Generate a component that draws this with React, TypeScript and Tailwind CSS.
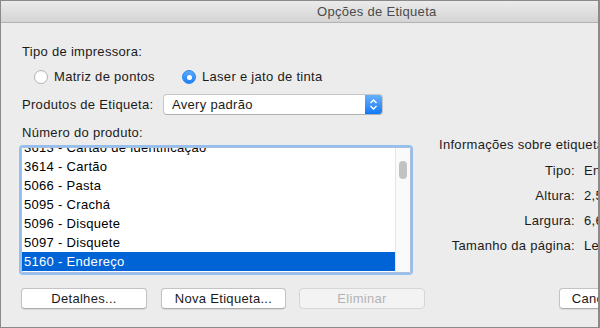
import React from 'react';

const products = [
  '3613 - Cartão de identificação',
  '3614 - Cartão',
  '5066 - Pasta',
  '5095 - Crachá',
  '5096 - Disquete',
  '5097 - Disquete',
  '5160 - Endereço',
];

const info = [
  ['Tipo:', 'Endereço'],
  ['Altura:', '2,54 cm'],
  ['Largura:', '6,67 cm'],
  ['Tamanho da página:', 'Letter'],
];

const Radio: React.FC<{ checked?: boolean; label: string; className?: string }> = ({ checked, label, className }) => (
  <div className={`flex items-center gap-[6px] ${className ?? ''}`}>
    {checked ? (
      <span className="w-[14px] h-[14px] rounded-full bg-gradient-to-b from-[#5aaaff] to-[#1a7ff5] border border-[#2b84ea] flex items-center justify-center">
        <span className="w-[5px] h-[5px] rounded-full bg-white" />
      </span>
    ) : (
      <span className="w-[14px] h-[14px] rounded-full bg-white border border-[#b4b4b4] shadow-[inset_0_1px_1px_rgba(0,0,0,0.04)]" />
    )}
    <span>{label}</span>
  </div>
);

const Button: React.FC<{ label: string; disabled?: boolean; className?: string }> = ({ label, disabled, className }) => (
  <button
    className={`h-[21px] rounded-[4px] border text-[13px] leading-none tracking-[0.3px] ${
      disabled
        ? 'bg-[#f3f3f3] border-[#d6d6d6] text-[#b3b3b3]'
        : 'bg-white border-[#c3c3c3] border-b-[#adadad] text-[#1a1a1a] shadow-[0_0.5px_1px_rgba(0,0,0,0.08)]'
    } ${className ?? ''}`}
  >
    {label}
  </button>
);

export default function App() {
  return (
    <div
      className="w-[600px] h-[328px] overflow-hidden bg-[#ececec] border border-r-2 border-[#8a8a8a] flex flex-col text-[13px] tracking-[0.3px] text-[#1b1b1b]"
      style={{ fontFamily: '"Liberation Sans", Arial, sans-serif' }}
    >
      <div className="h-[22px] shrink-0 flex items-center pl-[316px] bg-gradient-to-b from-[#ebebeb] to-[#d4d4d4] border-b border-[#b2b2b2] text-[#4b4b4b]">
        Opções de Etiqueta
      </div>

      <div className="flex flex-col pl-[21px]">
        <div className="mt-[21px] h-[16px] leading-[16px]">Tipo de impressora:</div>

        <div className="mt-[9px] h-[16px] leading-[16px] flex pl-[12px]">
          <Radio label="Matriz de pontos" className="w-[148px]" />
          <Radio checked label="Laser e jato de tinta" />
        </div>

        <div className="mt-[9px] h-[21px] flex items-center">
          <span className="w-[141px]">Produtos de Etiqueta:</span>
          <div className="w-[220px] h-[21px] flex bg-white border border-[#c6c6c6] border-b-[#b0b0b0] rounded-[4px] overflow-hidden">
            <span className="flex-1 flex items-center pl-[8px]">Avery padrão</span>
            <span className="w-[17px] flex items-center justify-center bg-gradient-to-b from-[#64b0fb] to-[#0b79f6]">
              <svg width="9" height="13" viewBox="0 0 9 13" fill="none" stroke="white" strokeWidth="1.4">
                <path d="M1.5 5 L4.5 2 L7.5 5" />
                <path d="M1.5 8 L4.5 11 L7.5 8" />
              </svg>
            </span>
          </div>
        </div>

        <div className="mt-[10px] flex">
          <div className="w-[391px] shrink-0 flex flex-col">
            <div className="h-[16px] leading-[16px]">Número do produto:</div>
            <div className="mt-[4px] -ml-[3px] w-[394px] h-[130px] rounded-[4px] border-2 border-[#95bff1]">
              <div className="h-full border border-[#a9bedb] rounded-[2px] bg-white flex overflow-hidden">
                <div className="flex-1 overflow-hidden">
                  <div className="-mt-[10px]">
                    {products.map((p, i) => (
                      <div
                        key={p}
                        className={`h-[19px] leading-[19px] pl-[2px] whitespace-nowrap ${
                          i === products.length - 1 ? 'bg-[#0064d7] text-white' : 'text-black'
                        }`}
                      >
                        {p}
                      </div>
                    ))}
                  </div>
                </div>
                <div className="w-[15px] bg-[#fafafa] border-l border-[#e6e6e6] flex justify-center">
                  <div className="mt-[13px] w-[8px] h-[18px] rounded-full bg-[#c2c2c2]" />
                </div>
              </div>
            </div>
          </div>

          <div className="ml-[26px] shrink-0 mt-[12px] flex flex-col whitespace-nowrap">
            <div className="h-[16px] leading-[16px]">Informações sobre etiqueta</div>
            <div className="mt-[5px] grid grid-cols-[136px_auto] gap-x-[9px]">
              {info.map(([k, v]) => (
                <React.Fragment key={k}>
                  <div className="h-[25px] flex items-center justify-end">{k}</div>
                  <div className="h-[25px] flex items-center">{v}</div>
                </React.Fragment>
              ))}
            </div>
          </div>
        </div>

        <div className="mt-[13px] flex shrink-0 whitespace-nowrap">
          <Button label="Detalhes..." className="w-[126px] -ml-[1px] shrink-0" />
          <Button label="Nova Etiqueta..." className="w-[125px] ml-[14px] shrink-0" />
          <Button label="Eliminar" disabled className="w-[126px] ml-[13px] shrink-0" />
          <Button label="Cancelar" className="w-[80px] ml-[134px] shrink-0" />
        </div>
      </div>
    </div>
  );
}
